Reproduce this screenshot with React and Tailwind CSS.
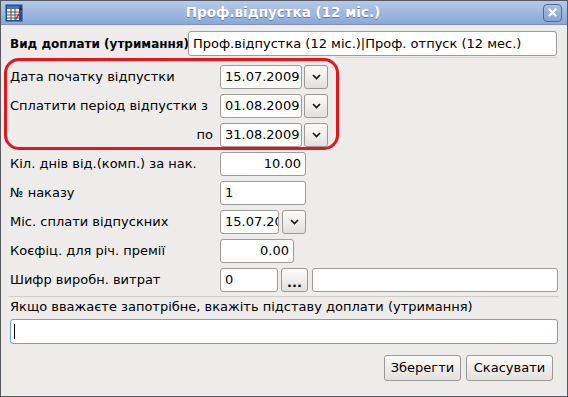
import React from 'react';

const font = { fontFamily: '"DejaVu Sans", sans-serif' };

const Field = ({ w, value, right, className = '' }) => (
    <div
        className={`h-[24px] ${w} bg-white border border-[#9d9c9b] rounded-[3px] flex items-center px-[4px] overflow-hidden whitespace-nowrap text-[13px] text-black ${right ? 'justify-end' : ''} ${className}`}
    >
        {value}
    </div>
);

const Chevron = () => (
    <svg width="9" height="6" viewBox="0 0 9 6">
        <path d="M1 1 L4.5 4.5 L8 1" fill="none" stroke="#111" strokeWidth="1.6" />
    </svg>
);

const Btn = ({ w = 'w-[24px]', children, className = '' }) => (
    <div
        className={`h-[24px] ${w} shrink-0 rounded-[3px] border border-[#9a9997] bg-gradient-to-b from-[#fbfbfa] to-[#e2e0dd] flex items-center justify-center text-[13px] text-black ${className}`}
    >
        {children}
    </div>
);

const Label = ({ children, right }) => (
    <div className={`w-[219px] shrink-0 pl-[9px] text-[13px] text-black whitespace-nowrap ${right ? 'text-right pr-[7px]' : ''}`}>
        {children}
    </div>
);

export default function App() {
    return (
        <div
            style={font}
            className="w-[568px] h-[397px] bg-[#edeceb] border border-[#56595e] flex flex-col relative overflow-hidden"
        >
            {/* Title bar */}
            <div className="h-[24px] bg-gradient-to-b from-[#b5c9e9] to-[#8aa7d6] border-b border-[#7c94bd] flex items-center relative">
                <svg className="ml-[4px]" width="18" height="18" viewBox="0 0 18 18">
                    <rect x="0.5" y="0.5" width="17" height="17" fill="#1b4f9a" />
                    <rect x="2" y="2" width="12" height="14" fill="#f4f4f4" />
                    <rect x="2" y="2" width="12" height="3" fill="#4a6fb5" />
                    <path d="M2 8 H14 M2 11 H14 M2 14 H14 M6 5 V16 M10 5 V16" stroke="#555" strokeWidth="1" />
                    <path d="M10 15 L16 6 L17 7 L11 16 Z" fill="#c0262b" />
                    <path d="M15 4 L17 6" stroke="#222" strokeWidth="1.5" />
                </svg>
                <div className="flex-1 text-center text-white font-bold text-[13.5px] [text-shadow:0_1px_0_#5b77a6]">
                    Проф.відпустка (12 міс.)
                </div>
                <div className="mr-[5px] w-[19px] h-[18px] rounded-[4px] border border-[#4f6a97] bg-gradient-to-b from-[#a9c0e4] to-[#86a3d3] flex items-center justify-center">
                    <svg width="9" height="9" viewBox="0 0 9 9">
                        <path d="M1.5 1.5 L7.5 7.5 M7.5 1.5 L1.5 7.5" stroke="#fff" strokeWidth="2.2" strokeLinecap="round" />
                    </svg>
                </div>
            </div>

            {/* Form */}
            <div className="flex flex-col pt-[6px]">
                <div className="flex items-center h-[25px]">
                    <div className="w-[187px] shrink-0 pl-[9px] text-[12px] font-bold text-black whitespace-nowrap">Вид доплати (утримання)</div>
                    <Field w="w-[369px]" value="Проф.відпустка (12 міс.)|Проф. отпуск (12 мес.)" className="h-[25px]" />
                </div>
                <div className="ml-[335px] mr-[10px] h-px bg-[#d6d4d1] mt-[1px]" />

                <div className="flex flex-col gap-[4px] mt-[6px]">
                    <div className="flex items-center h-[25px]">
                        <Label>Дата початку відпустки</Label>
                        <Field w="w-[82px]" value="15.07.2009" />
                        <Btn className="ml-[2px]"><Chevron /></Btn>
                    </div>
                    <div className="flex items-center h-[25px]">
                        <Label>Сплатити період відпустки з</Label>
                        <Field w="w-[82px]" value="01.08.2009" />
                        <Btn className="ml-[2px]"><Chevron /></Btn>
                    </div>
                    <div className="flex items-center h-[25px]">
                        <Label right>по</Label>
                        <Field w="w-[82px]" value="31.08.2009" />
                        <Btn className="ml-[2px]"><Chevron /></Btn>
                    </div>
                    <div className="flex items-center h-[25px]">
                        <Label>Кіл. днів від.(комп.) за нак.</Label>
                        <Field w="w-[86px]" value="10.00" right />
                    </div>
                    <div className="flex items-center h-[25px]">
                        <Label>№ наказу</Label>
                        <Field w="w-[86px]" value="1" />
                    </div>
                    <div className="flex items-center h-[25px]">
                        <Label>Міс. сплати відпускних</Label>
                        <Field w="w-[59px]" value="15.07.2009" className="justify-start" />
                        <Btn className="ml-[3px]"><Chevron /></Btn>
                    </div>
                    <div className="flex items-center h-[25px]">
                        <Label>Коєфіц. для річ. премії</Label>
                        <Field w="w-[74px]" value="0.00" right />
                    </div>
                    <div className="flex items-center h-[25px]">
                        <Label>Шифр виробн. витрат</Label>
                        <Field w="w-[58px]" value="0" />
                        <Btn w="w-[27px]" className="ml-[3px] text-[10px] font-bold text-[#3d4a66] pt-[6px]">...</Btn>
                        <Field w="w-[246px]" value="" className="ml-[4px]" />
                    </div>
                </div>

                <div className="mx-[8px] h-px bg-[#cfcdca] mt-[4px]" />
                <div className="pl-[9px] mt-[1px] text-[13px] text-black leading-[18px]">
                    Якщо вважаєте запотрібне, вкажіть підставу доплати (утримання)
                </div>
                <div className="mx-[9px] mt-[3px] h-[25px] bg-white border border-[#7a9fd3] rounded-[3px] flex items-center pl-[3px]">
                    <div className="w-px h-[15px] bg-black" />
                </div>

                <div className="flex justify-end gap-[5px] mr-[14px] mt-[11px]">
                    <Btn w="w-[77px]" className="h-[26px] border-[#6f8fc4]">Зберегти</Btn>
                    <Btn w="w-[87px]" className="h-[26px]">Скасувати</Btn>
                </div>
            </div>

            {/* red annotation */}
            <div className="absolute left-[3px] top-[57px] w-[335px] h-[92px] border-[3px] border-[#e3161c] rounded-[15px] pointer-events-none" />
        </div>
    );
}
